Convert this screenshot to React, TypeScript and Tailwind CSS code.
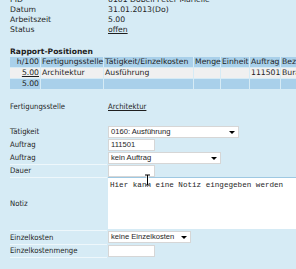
import type { ReactNode } from "react"

const info = [
  { label: "PID", value: "0101 Dobell Peter Marielle" },
  { label: "Datum", value: "31.01.2013(Do)" },
  { label: "Arbeitszeit", value: "5.00" },
  { label: "Status", value: "offen", link: true },
]

const cols = ["w-[30px]", "w-[62px]", "w-[89px]", "w-[26px]", "w-[28px]", "w-[30px]", "w-[60px]"]

function SelectBox({ value, width }: { value: string; width: string }): JSX.Element {
  return (
    <div
      className={`relative flex h-[12px] items-center border border-[#d6d6d6] bg-white pl-[2px] font-['Liberation_Sans',sans-serif] text-[7.6px] ${width}`}
    >
      <span className="leading-none">{value}</span>
      <span className="absolute right-[3px] top-[4px] h-0 w-0 border-x-[3px] border-t-[3px] border-x-transparent border-t-black" />
    </div>
  )
}

function InputBox({ value }: { value?: string }): JSX.Element {
  return (
    <div className="flex h-[12px] w-[47px] items-center border border-[#d6d6d6] bg-white pl-[2px] font-['Liberation_Sans',sans-serif] text-[7.6px]">
      <span className="leading-none">{value}</span>
    </div>
  )
}

function Label({ children, line }: { children: ReactNode; line?: boolean }): JSX.Element {
  return (
    <div className={`flex items-center border-b ${line ? "border-[#eef7fb]" : "border-transparent"}`}>
      {children}
    </div>
  )
}

export default function App(): JSX.Element {
  return (
    <div className="relative h-[269px] w-[296px] overflow-hidden bg-[#d6ebf5] text-[#1e1e1e]">
      <div className="-mt-[5px] flex flex-col pl-[10px] font-['DejaVu_Sans',sans-serif] text-[7.7px] leading-[10px]">
        {info.map((r) => (
          <div key={r.label} className="flex h-[10px]">
            <span className="w-[98px] shrink-0">{r.label}</span>
            <span className={r.link ? "underline" : ""}>{r.value}</span>
          </div>
        ))}

        <h2 className="mt-[12px] h-[10px] text-[7.6px] font-bold">Rapport-Positionen</h2>

        <table className="-ml-px -mt-px w-[333px] table-fixed border-separate border-spacing-[1px]">
          <colgroup>
            {cols.map((c, i) => (
              <col key={i} className={c} />
            ))}
          </colgroup>
          <tbody>
            <tr className="bg-[#a9d0ea]">
              <td className="h-[10px] whitespace-nowrap px-px text-right">h/100</td>
              <td className="whitespace-nowrap px-px">Fertigungsstelle</td>
              <td className="whitespace-nowrap px-px">Tätigkeit/Einzelkosten</td>
              <td className="whitespace-nowrap px-px">Menge</td>
              <td className="whitespace-nowrap px-px">Einheit</td>
              <td className="whitespace-nowrap px-px">Auftrag</td>
              <td className="whitespace-nowrap px-px">Bezeichnung</td>
            </tr>
            <tr className="bg-[#f0f0f0]">
              <td className="h-[10px] px-px text-right underline">5.00</td>
              <td className="whitespace-nowrap px-px">Architektur</td>
              <td className="whitespace-nowrap px-px">Ausführung</td>
              <td className="px-px" />
              <td className="px-px" />
              <td className="px-px text-right">111501</td>
              <td className="whitespace-nowrap px-px">Buraplan</td>
            </tr>
            <tr className="bg-[#a9d0ea]">
              <td className="h-[10px] px-px text-right">5.00</td>
              <td className="px-px" />
              <td className="px-px" />
              <td className="px-px" />
              <td className="px-px" />
              <td className="px-px" />
              <td className="px-px" />
            </tr>
          </tbody>
        </table>
      </div>

      <div className="mt-[11px] grid grid-cols-[97px_189px] grid-rows-[12px] gap-x-px pl-[10px] font-['DejaVu_Sans_Condensed','DejaVu_Sans',sans-serif] text-[7.7px]">
        <Label>Fertigungsstelle</Label>
        <div className="flex items-center underline">Architektur</div>
      </div>

      <div className="mt-[13px] grid grid-cols-[97px_189px] grid-rows-[13px_13px_13px_13px_53px_14px_13px] gap-x-px pl-[10px] font-['DejaVu_Sans_Condensed','DejaVu_Sans',sans-serif] text-[7.7px]">
        <Label>Tätigkeit</Label>
        <div>
          <SelectBox value="0160: Ausführung" width="w-[131px]" />
        </div>

        <Label>Auftrag</Label>
        <div>
          <InputBox value="111501" />
        </div>

        <Label line>Auftrag</Label>
        <div>
          <SelectBox value="kein Auftrag" width="w-[113px]" />
        </div>

        <Label line>Dauer</Label>
        <div>
          <InputBox />
        </div>

        <Label line>Notiz</Label>
        <div className="-mt-px h-[52px] whitespace-nowrap border-t border-[#9ec8e2] bg-white pl-[2px] pt-[3px] font-['Liberation_Mono',monospace] text-[7.6px] leading-[9px]">
          Hier kann eine Notiz eingegeben werden
        </div>

        <Label line>Einzelkosten</Label>
        <div>
          <SelectBox value="keine Einzelkosten" width="w-[83px]" />
        </div>

        <Label line>Einzelkostenmenge</Label>
        <div>
          <InputBox />
        </div>
      </div>

      {/* text cursor over the Dauer/Notiz border */}
      <svg className="absolute left-[144px] top-[174px]" width="7" height="12" viewBox="0 0 7 12">
        <path d="M1 1h5M3.5 1v10M1 11h5" stroke="#fff" strokeWidth="2.2" fill="none" />
        <path d="M1 1h5M3.5 1v10M1 11h5" stroke="#000" strokeWidth="1" fill="none" />
      </svg>
    </div>
  )
}
